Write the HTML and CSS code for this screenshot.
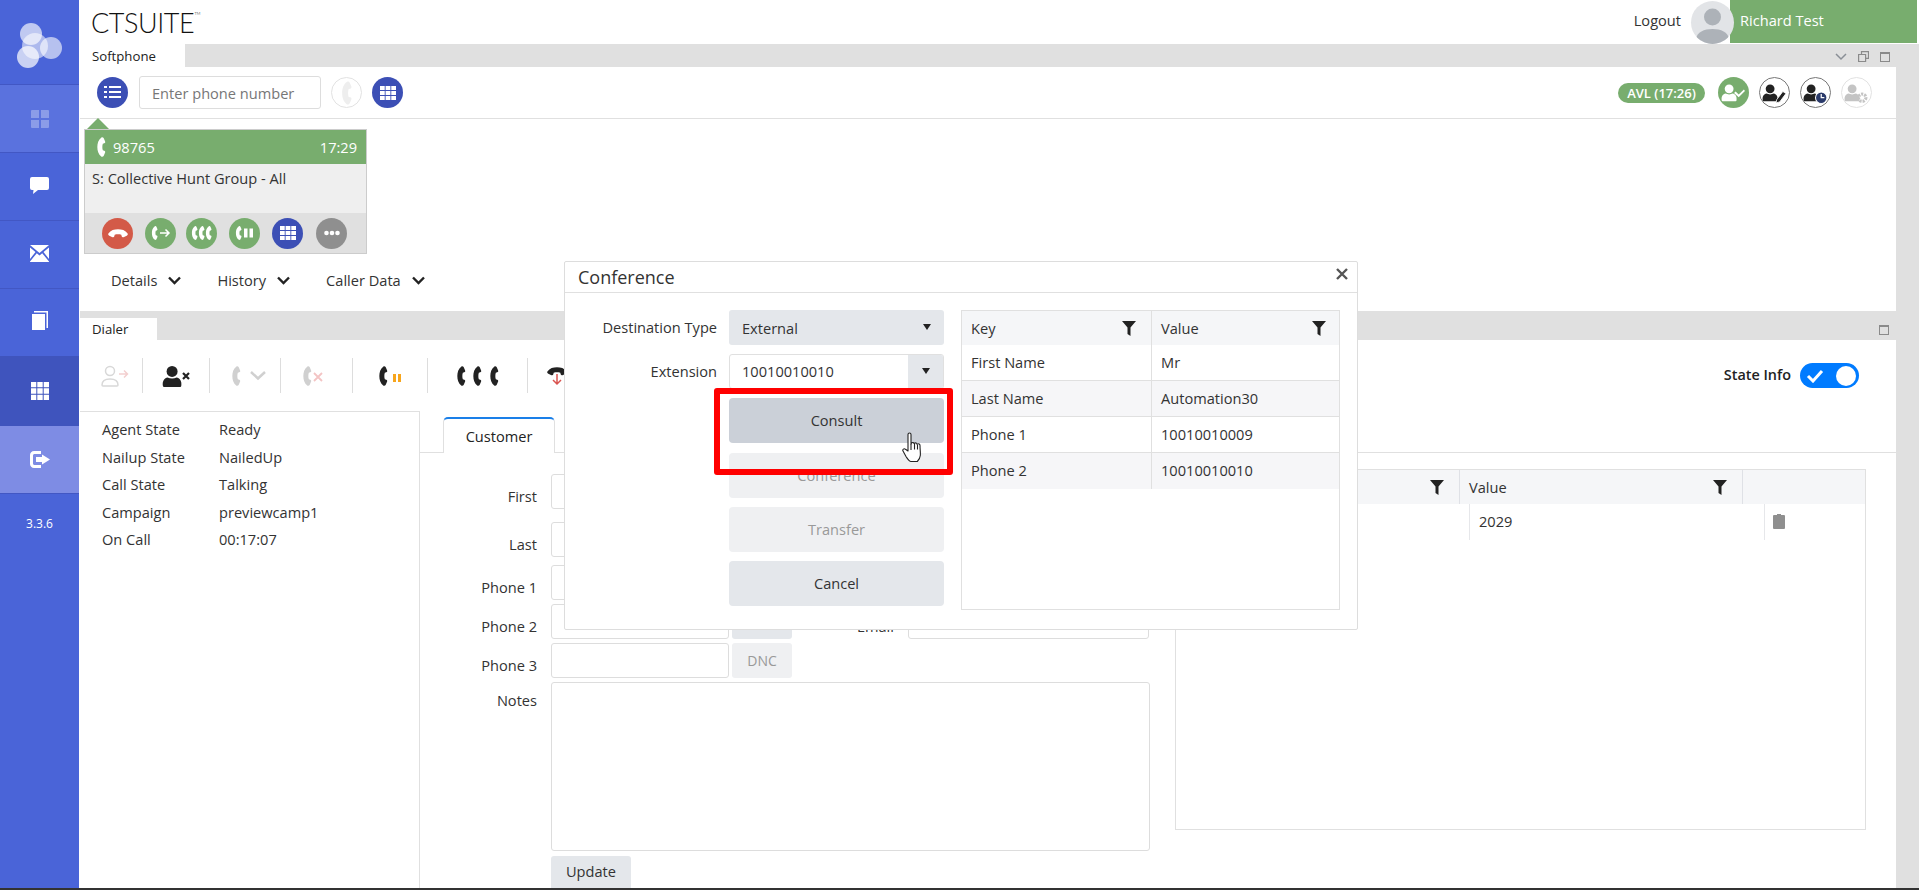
FILE: index.html
```html
<!DOCTYPE html>
<html lang="en">
<head>
  <meta charset="UTF-8" />
  <title>CTSuite Softphone</title>
  <link rel="stylesheet" href="styles.css">
</head>
<body>
  <!-- Shared icons -->
  <svg class="icon-defs" aria-hidden="true">
    <symbol id="i-phone" viewBox="0 0 17 24"><path d="M9 1.500C5.500 4 4.500 8 4.500 12s1 8 4.500 10.500c1 .5 2 0 2.500-1l1.500-3.500c.3-1 0-1.700-1-2l-1.500-.4c-.7-2.100-.7-5.100 0-7.200L12 8c1-.3 1.300-1 1-2l-1.500-3.500C11 1.500 10 1 9 1.500z"/></symbol>
    <symbol id="i-person" viewBox="0 0 24 24"><circle cx="11" cy="7" r="6"/><path d="M1 23c-1-6 2-9 5-9.500 3 1.500 7 1.500 10 0 3 .5 6 3.500 5 9.500-.1.600-.5 1-1.200 1H2.200C1.500 24 1.100 23.600 1 23z"/></symbol>
    <symbol id="i-grid" viewBox="0 0 18 18"><path d="M0 0h5.300v5.300H0zM6.300 0h5.400v5.300H6.300zM12.700 0H18v5.300h-5.300zM0 6.300h5.300v5.400H0zM6.300 6.300h5.400v5.400H6.300zM12.700 6.300H18v5.400h-5.300zM0 12.700h5.300V18H0zM6.300 12.700h5.400V18H6.300zM12.700 12.700H18V18h-5.300z"/></symbol>
    <symbol id="i-funnel" viewBox="0 0 14 15"><path d="M0 0h14L8.500 6.500V15l-3-2V6.500z"/></symbol>
  </svg>

  <nav class="sidebar">
    <div class="side-logo">
      <svg width="79" height="84" viewBox="0 0 79 84">
        <circle cx="31" cy="34" r="11" fill="#fff" fill-opacity=".65"/>
        <circle cx="35" cy="46" r="13" fill="#fff" fill-opacity=".55"/>
        <circle cx="51" cy="48" r="11" fill="#fff" fill-opacity=".6"/>
        <circle cx="28" cy="57" r="11" fill="#fff" fill-opacity=".7"/>
      </svg>
    </div>
    <div class="side-item faded">
      <svg width="18" height="18" viewBox="0 0 18 18" fill="#8b9ce8"><path d="M0 1a1 1 0 0 1 1-1h7v8H0zM10 0h7a1 1 0 0 1 1 1v7h-8zM0 10h8v8H1a1 1 0 0 1-1-1zM10 10h8v7a1 1 0 0 1-1 1h-7z"/></svg>
    </div>
    <div class="side-item raised">
      <svg width="19" height="18" viewBox="0 0 19 18" fill="#fff"><path d="M2 1h15a2 2 0 0 1 2 2v9a2 2 0 0 1-2 2H8l-5 4 .5-4H2a2 2 0 0 1-2-2V3a2 2 0 0 1 2-2z"/></svg>
    </div>
    <div class="side-item raised">
      <svg width="19" height="17" viewBox="0 0 19 17" fill="#fff"><path d="M0 0l9.500 8L19 0zM0 2.500V14l5.500-7zM19 2.500V14l-5.500-7zM6.800 8.200L0 16.500v.5h19v-.5l-6.800-8.300-2.700 2.300z"/></svg>
    </div>
    <div class="side-item raised">
      <svg width="18" height="20" viewBox="0 0 18 20" fill="#fff"><path d="M1 3h13v16H1zM3 0h14v17h-1.500V1.500H3z"/></svg>
    </div>
    <div class="side-item dark">
      <svg width="18" height="18" fill="#fff"><use href="#i-grid"/></svg>
    </div>
    <div class="side-item light">
      <svg width="20" height="17" viewBox="0 0 20 17" fill="#fff"><path d="M4 0h7v3H4.500C3.700 3 3 3.700 3 4.500v8c0 .8.700 1.500 1.500 1.500H11v3H4c-2.200 0-4-1.800-4-4V4c0-2.200 1.800-4 4-4z"/><path d="M12 3.500l8 5-8 5V11H6V6h6z"/></svg>
    </div>
    <div class="side-version">3.3.6</div>
  </nav>

  <div class="main">
    <header class="topbar">
      <div class="brand">CTSUITE<sup>TM</sup></div>
      <div class="user-box">
        <span class="logout">Logout</span>
        <span class="avatar">
          <svg width="43" height="43" viewBox="0 0 43 43" fill="#adb2b8"><circle cx="21.500" cy="16" r="8.500"/><path d="M5 38c1-7 8-10 16.500-10S37 31 38 38c-4 3.500-10 5-16.500 5S9 41.500 5 38z"/></svg>
        </span>
        <span class="user-name">Richard Test</span>
      </div>
    </header>

    <div class="workspace">
      <!-- Softphone panel -->
      <section class="panel">
        <div class="tab-strip strip-top">
          <div class="panel-tab">Softphone</div>
          <div class="strip-icons">
            <svg width="12" height="8" viewBox="0 0 12 8" fill="none" stroke="#8a8f96" stroke-width="1.500"><path d="M1 1l5 5 5-5"/></svg>
            <svg width="11" height="11" viewBox="0 0 11 11" fill="none" stroke="#8a8a8a" stroke-width="1.200"><path d="M3.500 3V.6h7v6.800H8M.6 3.500h7v7h-7z"/></svg>
            <span class="max-box"></span>
          </div>
        </div>
        <div class="phone-bar">
          <span class="circle blue">
            <svg width="17" height="15" viewBox="0 0 17 15" fill="#fff"><path d="M0 1h3v2H0zM5 1h12v2H5zM0 6h3v2H0zM5 6h12v2H5zM0 11h3v2H0zM5 11h12v2H5z"/></svg>
          </span>
          <div class="phone-input">Enter phone number</div>
          <span class="circle ghost"><svg width="19" height="26" fill="#eee"><use href="#i-phone"/></svg></span>
          <span class="circle blue"><svg width="16" height="14" fill="#fff" viewBox="0 0 18 18" preserveAspectRatio="none"><use href="#i-grid"/></svg></span>
          <div class="agent-status">
            <span class="avl-pill">AVL (17:26)</span>
            <span class="circle green"><svg width="25" height="25" viewBox="0 0 24 24" fill="#fff"><use href="#i-person" width="17" height="20" y="2"/><path d="M14 11l3 3 5-5 1 1.500-6 6-4.500-4z"/></svg></span>
            <span class="circle outline"><svg width="25" height="25" viewBox="0 0 24 24" fill="#222"><use href="#i-person" width="17" height="20" y="2"/><path d="M14 19l6-8 3 2-6 8-3.500 1z" stroke="#fff" stroke-width=".8"/></svg></span>
            <span class="circle outline"><svg width="25" height="25" viewBox="0 0 24 24" fill="#222"><use href="#i-person" width="17" height="20" y="2"/><circle cx="17.500" cy="17" r="5.500" fill="#2a3a6a" stroke="#fff"/><path d="M17.500 13.500V17h3" fill="none" stroke="#fff" stroke-width="1.200"/></svg></span>
            <span class="circle ghost"><svg width="25" height="25" viewBox="0 0 24 24" fill="#c4c4c4"><use href="#i-person" width="17" height="20" y="2"/><circle cx="17.500" cy="17" r="3.500" fill="none" stroke="#c4c4c4" stroke-width="3" stroke-dasharray="2 1"/></svg></span>
          </div>
        </div>
        <div class="phone-body">
          <div class="call-card">
            <div class="call-head">
              <svg class="call-phone" width="16" height="22" fill="#fff"><use href="#i-phone"/></svg>
              <span class="call-number">98765</span>
              <span class="call-time">17:29</span>
            </div>
            <div class="call-info">S: Collective Hunt Group - All</div>
            <div class="call-actions">
              <span class="circle red"><svg width="22" height="22" fill="#fff" viewBox="0 0 24 24"><use href="#i-phone" width="24" height="24" transform="rotate(90 12 12)"/></svg></span>
              <span class="circle green"><svg width="20" height="16" viewBox="0 0 20 16" fill="#fff"><use href="#i-phone" x="-2" width="11" height="16"/><path d="M9 8h9M14.500 4.500L18 8l-3.500 3.500" fill="none" stroke="#fff" stroke-width="1.500"/></svg></span>
              <span class="circle green tight"><svg width="22" height="16" viewBox="0 0 22 16" fill="#fff"><use href="#i-phone" x="-2" width="11" height="16"/><use href="#i-phone" x="5" width="11" height="16"/><use href="#i-phone" x="12" width="11" height="16"/></svg></span>
              <span class="circle green"><svg width="19" height="16" viewBox="0 0 19 16" fill="#fff"><use href="#i-phone" x="-2" width="11" height="16"/><path d="M9 3.500h3.500v9H9zM14.500 3.500H18v9h-3.500z"/></svg></span>
              <span class="circle blue"><svg width="16" height="14" fill="#fff" viewBox="0 0 18 18" preserveAspectRatio="none"><use href="#i-grid"/></svg></span>
              <span class="circle grey wide"><svg width="16" height="6" viewBox="0 0 16 6" fill="#fff"><circle cx="2.500" cy="3" r="2.300"/><circle cx="8" cy="3" r="2.300"/><circle cx="13.500" cy="3" r="2.300"/></svg></span>
            </div>
          </div>
          <div class="detail-links">
            <span class="detail-link">Details <svg class="chev" width="13" height="9" viewBox="0 0 13 9"><path d="M1 1.500l5.500 5.500L12 1.500"/></svg></span>
            <span class="detail-link">History <svg class="chev" width="13" height="9" viewBox="0 0 13 9"><path d="M1 1.500l5.500 5.500L12 1.500"/></svg></span>
            <span class="detail-link">Caller Data <svg class="chev" width="13" height="9" viewBox="0 0 13 9"><path d="M1 1.500l5.500 5.500L12 1.500"/></svg></span>
          </div>
        </div>
      </section>

      <!-- Dialer panel -->
      <section class="panel dialer-panel">
        <div class="tab-strip strip-dialer">
          <div class="panel-tab tab-small">Dialer</div>
          <div class="strip-icons"><span class="max-box"></span></div>
        </div>
        <div class="tool-bar">
          <div class="tool w62 push-right">
            <svg width="28" height="22" viewBox="0 0 28 22" fill="none" stroke="#d8d8d8" stroke-width="1.500"><circle cx="9" cy="6" r="4.500"/><path d="M1 20c0-4 3-6 8-6s8 2 8 6c0 .5-.5 1-1 1H2c-.5 0-1-.5-1-1z"/><path d="M18 9h8M23 5.500L26.500 9 23 12.500" stroke="#f3cfcf"/></svg>
          </div>
          <div class="tool w67">
            <svg width="28" height="22" viewBox="0 0 28 22" fill="#222"><use href="#i-person" width="22" height="22"/><path d="M21 8l6 6M27 8l-6 6" stroke="#222" stroke-width="2.200"/></svg>
          </div>
          <div class="tool w71 push-right">
            <svg width="36" height="22" viewBox="0 0 36 22" fill="#d0d0d0"><use href="#i-phone" x="-3" width="16" height="22"/><path d="M20 7l7 6.500L34 7" fill="none" stroke="#d0d0d0" stroke-width="2.500"/></svg>
          </div>
          <div class="tool w72">
            <svg width="28" height="22" viewBox="0 0 28 22" fill="#d0d0d0"><use href="#i-phone" x="-4" width="16" height="22"/><path d="M11 8l8 8M19 8l-8 8" stroke="#f3c4c4" stroke-width="1.800"/></svg>
          </div>
          <div class="tool w75">
            <svg width="24" height="22" viewBox="0 0 24 22" fill="#222"><use href="#i-phone" x="-3" width="16" height="22"/><path d="M15 9h3v8h-3zM20 9h3v8h-3z" fill="#f7a51c"/></svg>
          </div>
          <div class="tool w100">
            <svg width="44" height="22" viewBox="0 0 44 22" fill="#222"><use href="#i-phone" x="-3" width="16" height="22"/><use href="#i-phone" x="13" width="16" height="22"/><use href="#i-phone" x="30" width="16" height="22"/></svg>
          </div>
          <div class="tool tool-last">
            <svg width="22" height="22" viewBox="0 0 22 22"><use href="#i-phone" width="22" height="22" y="-5" fill="#222" transform="rotate(90 11 6)"/><path d="M11 9v10M7 15l4 4 4-4" fill="none" stroke="#d9534f" stroke-width="1.500"/></svg>
          </div>
          <div class="state-toggle">
            <span class="state-label">State Info</span>
            <span class="toggle">
              <svg width="18" height="14" viewBox="0 0 18 14" fill="none" stroke="#fff" stroke-width="3"><path d="M2 7l5 5 9-10"/></svg>
              <span class="knob"></span>
            </span>
          </div>
        </div>
        <div class="dialer-body">
          <div class="state-panel">
            <div class="state-row"><span class="state-key">Agent State</span><span>Ready</span></div>
            <div class="state-row"><span class="state-key">Nailup State</span><span>NailedUp</span></div>
            <div class="state-row"><span class="state-key">Call State</span><span>Talking</span></div>
            <div class="state-row"><span class="state-key">Campaign</span><span>previewcamp1</span></div>
            <div class="state-row"><span class="state-key">On Call</span><span>00:17:07</span></div>
          </div>
          <div class="record-area">
            <div class="record-tabs"><div class="record-tab">Customer</div></div>
            <div class="record-body">
              <form class="customer-form">
                <div class="form-row row-first"><label>First</label><div class="field"></div></div>
                <div class="form-row row-last"><label>Last</label><div class="field"></div></div>
                <div class="form-row row-phone1"><label>Phone 1</label><div class="field"></div><div class="dnc"></div></div>
                <div class="form-row row-phone"><label>Phone 2</label><div class="field"></div><div class="dnc dnc-on"></div><label class="email-label">Email</label><div class="field field-email"></div></div>
                <div class="form-row row-phone"><label>Phone 3</label><div class="field"></div><div class="dnc">DNC</div></div>
                <div class="form-row row-notes"><label>Notes</label><div class="field field-notes"></div></div>
                <div class="form-row row-update"><button type="button" class="update-btn">Update</button></div>
              </form>
              <div class="data-table">
                <div class="data-head">
                  <div class="data-th"><span></span><svg class="funnel" width="14" height="15"><use href="#i-funnel"/></svg></div>
                  <div class="data-th">Value <svg class="funnel" width="14" height="15"><use href="#i-funnel"/></svg></div>
                  <div class="data-th"></div>
                </div>
                <div class="data-row">
                  <div class="data-td"></div>
                  <div class="data-td">2029</div>
                  <div class="data-td">
                    <svg width="12" height="16" viewBox="0 0 12 16" fill="#8f8f8f"><path d="M4 2V1h4v1h3a1 1 0 0 1 1 1v12a1 1 0 0 1-1 1H1a1 1 0 0 1-1-1V3a1 1 0 0 1 1-1z"/></svg>
                  </div>
                </div>
              </div>
            </div>
          </div>
        </div>
      </section>
    </div>
    <div class="bottom-line"></div>
  </div>

  <!-- Conference dialog -->
  <div class="dialog">
    <div class="dialog-head">
      <span class="dialog-title">Conference</span>
      <svg class="dialog-close" width="12" height="12" viewBox="0 0 12 12" stroke="#555" stroke-width="2.400"><path d="M1 1l10 10M11 1L1 11"/></svg>
    </div>
    <div class="dialog-body">
      <div class="dialog-form">
        <label>Destination Type</label>
        <div class="select"><span>External</span><span class="arrow"></span></div>
        <label>Extension</label>
        <div class="combo"><span class="combo-value">10010010010</span><span class="combo-btn"><span class="arrow"></span></span></div>
        <button type="button" class="dlg-btn btn-hover">Consult</button>
        <button type="button" class="dlg-btn btn-off btn-conference">Conference</button>
        <button type="button" class="dlg-btn btn-off">Transfer</button>
        <button type="button" class="dlg-btn">Cancel</button>
      </div>
      <div class="key-table">
        <div class="key-row key-head">
          <div class="key-cell">Key <svg class="funnel" width="14" height="15"><use href="#i-funnel"/></svg></div>
          <div class="key-cell">Value <svg class="funnel" width="14" height="15"><use href="#i-funnel"/></svg></div>
        </div>
        <div class="key-row"><div class="key-cell">First Name</div><div class="key-cell">Mr</div></div>
        <div class="key-row alt"><div class="key-cell">Last Name</div><div class="key-cell">Automation30</div></div>
        <div class="key-row"><div class="key-cell">Phone 1</div><div class="key-cell">10010010009</div></div>
        <div class="key-row alt"><div class="key-cell">Phone 2</div><div class="key-cell">10010010010</div></div>
      </div>
    </div>
  </div>

  <!-- Annotation over the screenshot -->
  <div class="highlight"></div>
  <svg class="hand-cursor" width="22" height="31" viewBox="0 0 22 31" fill="#fff" stroke="#222" stroke-width="1.100" stroke-linejoin="round">
    <path d="M6 2.500c0-2 3-2 3 0V12l.5-1c1-1 2.500-.5 2.500.5l.5-.3c1-.8 2.500-.2 2.500 1l.5-.2c1.200-.6 2.500 0 2.500 1.500 0 4 .6 7 .3 10-.3 3-2 5-3 6H9c-2 0-3-2-5-5l-3-5.500c-.8-1.500 1-3 2.500-1.700L6 19z"/>
    <path d="M9 12v6M12.500 11.500v6M15.500 12.500v5" fill="none"/>
  </svg>
</body>
</html>
```

FILE: styles.css
```css
* {
  box-sizing: border-box;
  margin: 0;
  padding: 0;
}
html, body {
  height: 890px;
  overflow: hidden;
}
body {
  display: flex;
  font-family: "Open Sans", "Liberation Sans", sans-serif;
  font-size: 14.6px;
  color: #333;
  background-color: #fff;
}
.icon-defs {
  position: absolute;
  width: 0;
  height: 0;
}

/* Sidebar */
.sidebar {
  width: 79px;
  flex-shrink: 0;
  background-color: #4a64d8;
  color: #fff;
}
.side-logo {
  height: 84px;
}
.side-item {
  height: 68px;
  display: flex;
  align-items: center;
  justify-content: center;
  border-top: 1px solid #4257c4;
}
.side-item.raised svg {
  margin-top: -3px;
}
.side-item.faded {
  background-color: #5a72de;
}
.side-item.dark {
  background-color: #3f54bd;
  height: 70px;
  border-top: none;
}
.side-item.light {
  background-color: #7e8ce4;
  height: 67px;
  border-top: none;
}
.side-version {
  border-top: 1px solid #4257c4;
  padding-top: 21px;
  text-align: center;
  font-size: 12px;
}

/* Top bar */
.main {
  flex: 1;
  min-width: 0;
  display: flex;
  flex-direction: column;
}
.topbar {
  height: 44px;
  display: flex;
  justify-content: space-between;
  padding: 0 2px 0 12px;
}
.brand {
  font-family: "Lato", sans-serif;
  font-weight: 300;
  font-size: 27px;
  line-height: 46px;
  letter-spacing: -0.4px;
  color: #111;
}
.brand sup {
  font-size: 4px;
  vertical-align: 18px;
  line-height: 0;
  letter-spacing: 0;
}
.user-box {
  display: flex;
  align-items: center;
}
.logout {
  margin: -5px 10px 0 0;
}
.avatar {
  width: 43px;
  height: 43px;
  border-radius: 50%;
  background-color: #e2e4e7;
  overflow: hidden;
  margin-right: -4px;
  z-index: 1;
}
.avatar svg {
  display: block;
}
.user-name {
  width: 187px;
  height: 43px;
  line-height: 41px;
  padding-left: 10px;
  background-color: #78ad6e;
  color: #fff;
  align-self: flex-start;
}

/* Panels */
.workspace {
  flex: 1;
  min-height: 0;
  padding: 0 23px 0 1px;
  background: linear-gradient(to right, #fff 1px, #e0e0e0 1px);
  display: flex;
  flex-direction: column;
}
.panel {
  background-color: #fff;
}
.tab-strip {
  display: flex;
  justify-content: space-between;
  background-color: #e0e0e0;
  align-items: flex-end;
}
.strip-top {
  height: 23px;
  margin-right: -23px;
  position: relative;
}
.strip-dialer {
  height: 29px;
}
.panel-tab {
  width: 105px;
  height: 23px;
  padding-left: 12px;
  background-color: #fff;
  font-size: 13.2px;
  line-height: 24px;
  color: #222;
}
.tab-small {
  width: 77px;
  height: 22px;
  line-height: 22px;
}
.strip-icons {
  display: flex;
  align-items: center;
  gap: 11px;
  height: 21px;
  padding-right: 7px;
  align-self: flex-end;
}
.strip-top .strip-icons {
  padding-right: 29px;
}
.max-box {
  width: 10px;
  height: 10px;
  border: 1px solid #8a8a8a;
  border-top-width: 2px;
}

/* Circular buttons */
.circle {
  width: 31px;
  height: 31px;
  border-radius: 50%;
  display: flex;
  align-items: center;
  justify-content: center;
  flex-shrink: 0;
}
.circle.blue {
  background-color: #3c4fb5;
}
.circle.green {
  background-color: #78ad6e;
}
.circle.red {
  background-color: #d35a48;
}
.circle.grey {
  background-color: #8f8f8f;
}
.circle.ghost {
  border: 1px solid #e2e2e2;
  background-color: #fff;
}
.circle.outline {
  border: 1px solid #777;
  background-color: #fff;
}

/* Softphone */
.phone-bar {
  height: 52px;
  display: flex;
  align-items: center;
  gap: 10px;
  padding: 0 24px 0 17px;
  border-bottom: 1px solid #e0e0e0;
}
.phone-input {
  width: 182px;
  height: 33px;
  margin-left: 1px;
  padding-left: 12px;
  border: 1px solid #ddd;
  border-radius: 3px;
  line-height: 33px;
  color: #777;
}
.agent-status {
  margin-left: auto;
  display: flex;
  align-items: center;
  gap: 10px;
  font-size: 13px;
}
.avl-pill {
  width: 87px;
  height: 20px;
  margin-right: 3px;
  border-radius: 10px;
  background-color: #78ad6e;
  color: #fff;
  font-weight: 600;
  font-size: 13px;
  line-height: 20px;
  text-align: center;
}
.phone-body {
  height: 192px;
  padding: 10px 0 0 4px;
}
.call-card {
  width: 283px;
  height: 125px;
  border: 1px solid #ccc;
  display: flex;
  flex-direction: column;
  position: relative;
}
.call-card::before {
  content: "";
  position: absolute;
  left: 2px;
  top: -12px;
  border-left: 11px solid transparent;
  border-right: 11px solid transparent;
  border-bottom: 11px solid #78ad6e;
}
.call-head {
  height: 34px;
  display: flex;
  align-items: center;
  padding: 0 9px 0 8px;
  background-color: #78ad6e;
  color: #fff;
}
.call-phone {
  flex-shrink: 0;
}
.call-number {
  margin-left: 4px;
}
.call-time {
  margin-left: auto;
}
.call-info {
  flex: 1;
  padding: 4px 7px;
  background-color: #efefef;
}
.call-actions {
  height: 40px;
  display: flex;
  align-items: center;
  gap: 12px;
  padding-left: 17px;
  background-color: #e0e0e0;
}
.circle.tight {
  margin-left: -2px;
}
.circle.wide {
  margin-left: 1px;
}
.detail-links {
  display: flex;
  gap: 36px;
  height: 52px;
  align-items: center;
  padding: 0 0 0 27px;
}
.detail-link {
  display: flex;
  align-items: center;
  gap: 11px;
}
.chev {
  fill: none;
  stroke: #222;
  stroke-width: 2.4;
}

/* Dialer toolbar */
.tool-bar {
  height: 71px;
  display: flex;
  align-items: center;
  padding-right: 37px;
}
.tool {
  height: 35px;
  display: flex;
  align-items: center;
  justify-content: center;
  border-right: 1px solid #ddd;
  flex-shrink: 0;
}
.tool.push-right {
  padding-left: 8px;
}
.tool-last {
  border-right: none;
  margin-left: 18px;
}
.w62 { width: 63px; }
.w67 { width: 67px; }
.w71 { width: 71px; }
.w72 { width: 72px; }
.w75 { width: 75px; }
.w100 { width: 100px; }
.state-toggle {
  margin-left: auto;
  display: flex;
  align-items: center;
  gap: 9px;
}
.state-label {
  font-weight: 600;
  font-size: 14.4px;
  margin-top: -2px;
  color: #222;
}
.toggle {
  width: 59px;
  height: 25px;
  padding: 0 3px 0 6px;
  border-radius: 13px;
  background-color: #007bff;
  display: flex;
  align-items: center;
  justify-content: space-between;
}
.knob {
  width: 20px;
  height: 20px;
  border-radius: 50%;
  background-color: #fff;
}

/* Dialer body */
.dialer-panel {
  flex: 1;
  min-height: 0;
}
.dialer-body {
  display: flex;
  height: 477px;
}
.state-panel {
  width: 340px;
  flex-shrink: 0;
  padding: 3px 0 0 22px;
  border-top: 1px solid #e0e0e0;
  border-right: 1px solid #e0e0e0;
}
.state-row {
  display: flex;
  height: 27.6px;
  line-height: 28px;
}
.state-key {
  width: 117px;
}
.record-area {
  flex: 1;
  min-width: 0;
}
.record-tabs {
  height: 42px;
  padding: 6px 0 0 23px;
  border-bottom: 1px solid #e0e0e0;
}
.record-tab {
  width: 112px;
  height: 36px;
  border: 1px solid #e0e0e0;
  border-top: 2px solid #1a7fe8;
  border-bottom: none;
  border-radius: 5px 5px 0 0;
  background-color: #fff;
  text-align: center;
  line-height: 34px;
  color: #222;
}
.record-body {
  display: flex;
  align-items: flex-start;
}
.customer-form {
  width: 730px;
  flex-shrink: 0;
  padding-top: 21px;
}
.form-row {
  display: flex;
  gap: 14px;
  height: 35px;
}
.form-row label {
  width: 117px;
  flex-shrink: 0;
  text-align: right;
  padding-top: 12px;
}
.row-first {
  margin-bottom: 13px;
}
.row-last {
  margin-bottom: 8px;
}
.row-phone1,
.row-phone {
  margin-bottom: 4px;
}
.row-notes {
  height: 169px;
  margin-bottom: 5px;
}
.form-row.row-notes label {
  padding-top: 8px;
}
.row-update {
  height: 32px;
  padding-left: 131px;
}
.field {
  width: 178px;
  height: 100%;
  flex-shrink: 0;
  border: 1px solid #ddd;
  border-radius: 3px;
  background-color: #fff;
}
.field-notes {
  width: 599px;
}
.field-email {
  width: 241px;
}
.dnc {
  width: 60px;
  height: 100%;
  flex-shrink: 0;
  margin-left: -11px;
  border-radius: 3px;
  background-color: #eff0f2;
  color: #999;
  font-size: 14px;
  line-height: 35px;
  text-align: center;
}
.dnc-on {
  background-color: #e4e7eb;
}
.form-row .email-label {
  width: 88px;
}
.update-btn {
  width: 80px;
  height: 32px;
  padding-bottom: 2px;
  border: none;
  border-radius: 3px 3px 0 0;
  background-color: #e4e7eb;
  font-family: inherit;
  font-size: 14.6px;
  color: #333;
}

/* Data table behind the dialog */
.data-table {
  width: 691px;
  height: 361px;
  margin: 16px 0 0 25px;
  border: 1px solid #e0e0e0;
}
.data-head {
  display: grid;
  grid-template-columns: 284px 283px 1fr;
  height: 34px;
  background-color: #f5f6f8;
}
.data-th {
  display: flex;
  align-items: center;
  justify-content: space-between;
  padding: 0 15px 0 9px;
  border-right: 1px solid #dfe1e6;
}
.data-th:last-child {
  border-right: none;
}
.funnel {
  fill: #222;
  flex-shrink: 0;
}
.data-row {
  display: grid;
  grid-template-columns: 294px 295px 1fr;
  height: 36px;
}
.data-td {
  display: flex;
  align-items: center;
  padding: 0 0 2px 9px;
  border-right: 1px solid #e6e7ea;
}
.data-td:last-child {
  border-right: none;
  padding-left: 8px;
}
.bottom-line {
  height: 2px;
  background-color: #333;
  margin-left: -79px;
  z-index: 2;
}

/* Conference dialog */
.dialog {
  position: absolute;
  left: 564px;
  top: 261px;
  width: 794px;
  height: 369px;
  background-color: #fff;
  border: 1px solid #ddd;
  border-radius: 2px;
}
.dialog-head {
  height: 31px;
  display: flex;
  align-items: center;
  justify-content: space-between;
  padding: 0 9px 0 13px;
  border-bottom: 1px solid #e0e0e0;
}
.dialog-title {
  font-size: 18px;
  color: #333;
}
.dialog-close {
  margin-top: -7px;
}
.dialog-body {
  display: flex;
  gap: 17px;
  padding: 17px 0 0 0;
}
.dialog-form {
  display: grid;
  grid-template-columns: 152px 215px;
  column-gap: 12px;
  row-gap: 9px;
  align-content: start;
}
.dialog-form label {
  text-align: right;
  line-height: 35px;
}
.select {
  height: 35px;
  padding: 1px 13px 0;
  display: flex;
  align-items: center;
  justify-content: space-between;
  background-color: #e4e7eb;
  border-radius: 3px;
}
.arrow {
  width: 0;
  height: 0;
  margin-top: -2px;
  border-left: 4.5px solid transparent;
  border-right: 4.5px solid transparent;
  border-top: 6px solid #222;
}
.combo {
  height: 35px;
  display: flex;
  border: 1px solid #e0e0e0;
  border-radius: 3px;
  overflow: hidden;
}
.combo-value {
  flex: 1;
  padding-left: 12px;
  line-height: 33px;
}
.combo-btn {
  width: 35px;
  display: flex;
  align-items: center;
  justify-content: center;
  background-color: #e4e7eb;
}
.dlg-btn {
  grid-column: 2;
  height: 45px;
  padding-bottom: 2px;
  border: none;
  border-radius: 4px;
  background-color: #e4e7eb;
  font-family: inherit;
  font-size: 14.6px;
  color: #333;
}
.btn-hover {
  background-color: #cbd0d8;
}
.btn-off {
  background-color: #eff0f2;
  color: #999;
}
.btn-conference {
  margin-top: 1px;
}
.key-table {
  width: 379px;
  height: 300px;
  border: 1px solid #e0e0e0;
}
.key-row {
  display: grid;
  grid-template-columns: 190px 1fr;
  height: 36px;
  border-bottom: 1px solid #e0e0e0;
}
.key-row:last-child {
  border-bottom: none;
}
.key-head {
  height: 34px;
  background-color: #f5f6f8;
  border-bottom: none;
}
.key-row.alt {
  background-color: #f6f6f8;
}
.key-cell {
  display: flex;
  align-items: center;
  justify-content: space-between;
  padding: 0 15px 2px 9px;
  border-right: 1px solid #e0e0e0;
}
.key-head .key-cell {
  padding-bottom: 0;
}
.key-cell:last-child {
  border-right: none;
  padding-right: 13px;
}

/* Red annotation and mouse pointer */
.highlight {
  position: absolute;
  left: 714px;
  top: 388px;
  width: 239px;
  height: 87px;
  border: 6px solid #f00;
  border-radius: 3px;
}
.hand-cursor {
  position: absolute;
  left: 902px;
  top: 432px;
}
```
